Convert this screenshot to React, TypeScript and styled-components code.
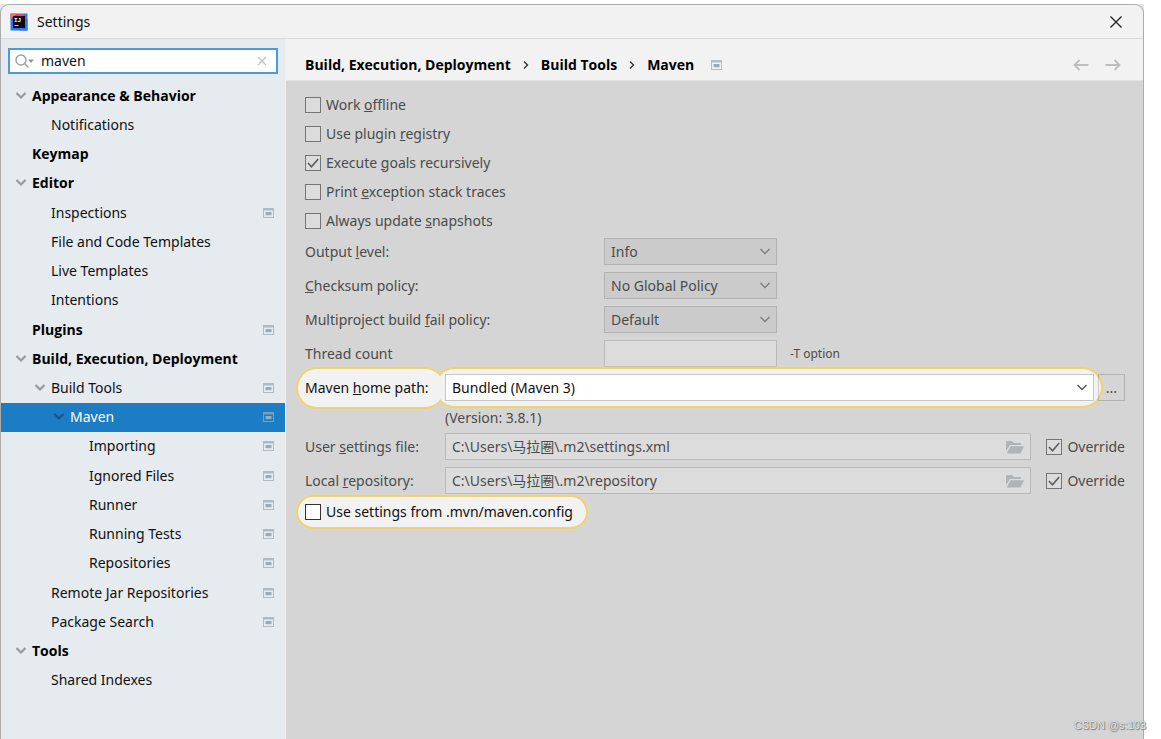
import React from 'react';
import styled, { createGlobalStyle, css } from 'styled-components';

const GlobalStyle = createGlobalStyle`
  * { box-sizing: border-box; }
  body {
    margin: 0;
    background: #fff;
    font-family: "Noto Sans", "Open Sans", "Noto Sans CJK SC", sans-serif;
    font-size: 14px;
    line-height: 20px;
    color: #111;
  }
  button, input, select { font: inherit; color: inherit; }
`;

const boldFont = css`
  font-family: "Open Sans", "Noto Sans", sans-serif;
  font-weight: 700;
  color: #000;
`;

const Page = styled.div`
  display: flex;
  flex-direction: column;
  min-height: 100vh;
  padding: 4px 17px 0 0;
`;

const Backdrop = styled.div`
  position: relative;
  flex: 1;
  display: flex;
  background: #e6e6e6;
`;

const Window = styled.div`
  flex: 1;
  display: flex;
  flex-direction: column;
  border: 1px solid #adadad;
  border-bottom: 0;
  border-radius: 9px 9px 0 0;
  background: #f2f2f2;
  overflow: hidden;
`;

const TitleBar = styled.header`
  display: flex;
  align-items: center;
  height: 34px;
  padding: 0 20px 0 9px;
  gap: 9px;
  border-bottom: 1px solid #dadada;
`;

const Title = styled.h1`
  flex: 1;
  margin: 0;
  font-size: 14px;
  font-weight: 400;
`;

const IconButton = styled.button`
  display: flex;
  align-items: center;
  justify-content: center;
  padding: 0;
  border: 0;
  background: none;
`;

const Body = styled.div`
  flex: 1;
  display: flex;
`;

const Sidebar = styled.aside`
  width: 284px;
  flex: none;
  background: #e5ebef;
`;

const SearchBox = styled.div`
  display: flex;
  align-items: center;
  height: 26px;
  margin: 9px 7px 7px;
  padding: 0 9px 0 5px;
  gap: 7px;
  border: 2px solid #4a9bd8;
  background: #fff;
`;

const SearchInput = styled.input`
  flex: 1;
  min-width: 0;
  padding: 0;
  border: 0;
  outline: 0;
  background: none;
`;

const Tree = styled.ul`
  display: grid;
  grid-auto-rows: 1fr;
  height: 614px;
  margin: 0;
  padding: 0;
  list-style: none;
`;

const TreeItem = styled.li`
  display: flex;
`;

const TreeRow = styled.button<{ $depth: number; $selected?: boolean; $bold?: boolean }>`
  flex: 1;
  display: flex;
  align-items: center;
  gap: 5px;
  padding: 0 11px 0 ${(p) => 14 + p.$depth * 19}px;
  border: 0;
  text-align: left;
  white-space: nowrap;
  color: ${(p) => (p.$selected ? '#fff' : '#111')};
  background: ${(p) => (p.$selected ? '#1c7cc4' : 'none')};
  ${(p) => p.$bold && boldFont}
`;

const ChevronSlot = styled.span`
  display: flex;
  width: 12px;
`;

const TreeLabel = styled.span`
  flex: 1;
`;

const Main = styled.main`
  flex: 1;
  min-width: 0;
  display: flex;
  flex-direction: column;
  border-left: 1px solid #eceff1;
`;

const Crumbs = styled.nav`
  display: flex;
  align-items: center;
  height: 42px;
  padding: 10px 22px 0 19px;
  gap: 12px;
  border-bottom: 1px solid #e2e2e2;
`;

const Crumb = styled.a`
  ${boldFont}
  text-decoration: none;
  white-space: nowrap;
`;

const CrumbIcon = styled.span`
  flex: 1;
  display: flex;
  padding-left: 5px;
`;

const NavButtons = styled.div`
  display: flex;
  gap: 16px;
`;

const Form = styled.form`
  flex: 1;
  padding: 9px 18px 0 19px;
  background: #d5d5d5;
  color: #4b4b4b;
`;

const CheckRow = styled.div`
  display: flex;
  align-items: center;
  height: 29px;
`;

const CheckLabel = styled.label`
  display: flex;
  align-items: center;
  gap: 5px;
  white-space: nowrap;
`;

const Tick = styled.span`
  display: grid;
  width: 16px;
  height: 16px;
  > * { grid-area: 1 / 1; }
  > svg { display: none; pointer-events: none; z-index: 1; }
  > input:checked + svg { display: block; }
`;

const TickInput = styled.input<{ $bright?: boolean }>`
  appearance: none;
  width: 16px;
  height: 16px;
  margin: 0;
  border: 1px solid ${(p) => (p.$bright ? '#333' : '#757575')};
  background: ${(p) => (p.$bright ? '#fff' : '#dcdcdc')};
`;

const Fields = styled.div`
  display: flex;
  flex-direction: column;
  gap: 7px;
  padding-top: 3px;
`;

const FieldRow = styled.div`
  display: flex;
  align-items: center;
  height: 27px;
  isolation: isolate;
`;

const FieldLabel = styled.label<{ $wide?: boolean }>`
  flex: none;
  width: ${(p) => (p.$wide ? 299 : 140)}px;
  white-space: nowrap;
`;

const SelectWrap = styled.span<{ $grow?: boolean }>`
  display: grid;
  align-items: center;
  ${(p) => (p.$grow ? css`flex: 1;` : css`width: 173px;`)}
  > * { grid-area: 1 / 1; }
  > svg { justify-self: end; margin-right: 6px; pointer-events: none; z-index: 1; }
`;

const Select = styled.select<{ $bright?: boolean }>`
  appearance: none;
  width: 100%;
  height: 27px;
  padding: 0 24px 0 6px;
  border: 1px solid ${(p) => (p.$bright ? '#c6c6c6' : '#b2b2b2')};
  border-radius: 0;
  background: ${(p) => (p.$bright ? '#fff' : '#cbcbcb')};
`;

const fieldBox = css`
  height: 27px;
  border: 1px solid #b9b9b9;
  background: #dcdcdc;
`;

const ThreadInput = styled.input`
  ${fieldBox}
  width: 173px;
  padding: 0 6px;
`;

const Hint = styled.span`
  margin-left: 13px;
  font-size: 12px;
`;

const PathBox = styled.span`
  ${fieldBox}
  flex: 1;
  display: flex;
  align-items: center;
  margin-right: 15px;
  padding: 0 6px;
`;

const PathInput = styled.input`
  flex: 1;
  min-width: 0;
  padding: 0;
  border: 0;
  background: none;
`;

const Version = styled.p`
  height: 18px;
  margin: 0 0 0 140px;
`;

/* The ring sits below every fill, so that neighbouring spotlights merge. */
const spotlight = css`
  position: relative;
  color: #111;
  &::before, &::after { content: ''; position: absolute; }
  &::before {
    z-index: -2;
    border-radius: 21px;
    background: #ebd27e;
    box-shadow: 0 0 2px #f3dc8c;
  }
  &::after { z-index: -1; border-radius: 19px; background: #f2f2f2; }
`;

const SpotLabel = styled(FieldLabel)`
  ${spotlight}
  &::before { inset: -11px -1px -11px -9px; }
  &::after { inset: -9px 1px -9px -7px; }
`;

const SpotSelect = styled.span`
  ${spotlight}
  flex: 1;
  display: flex;
  margin-right: 4px;
  &::before { inset: -7px -9px -7px -11px; }
  &::after { inset: -5px -7px -5px -9px; }
`;

const SpotCheck = styled.span`
  ${spotlight}
  padding-right: 6px;
  &::before { inset: -7px -9px; }
  &::after { inset: -5px -7px; }
`;

const SpotRow = styled(CheckRow)`
  height: 36px;
  isolation: isolate;
`;

const BrowseButton = styled.button`
  width: 27px;
  height: 27px;
  padding: 0;
  border: 1px solid rgba(0, 0, 0, 0.17);
  background: none;
  z-index: 1;
`;

const Watermark = styled.span`
  position: absolute;
  right: -2px;
  bottom: 4px;
  font-family: "Liberation Sans", sans-serif;
  font-size: 11px;
  color: #e6e6e6;
  text-shadow: 1px 1px 1px #777, 0 0 1px #777;
`;

const Chevron = ({ color = '#8b9095', width = 2 }: { color?: string; width?: number }) => (
  <svg width="12" height="12" viewBox="0 0 12 12" fill="none" stroke={color} strokeWidth={width}>
    <path d="M1.5 3 6 7.500l4.500-4.500" />
  </svg>
);

const ProjectIcon = () => (
  <svg width="11" height="10" viewBox="0 0 11 10">
    <path fill="#9cabb5" fillOpacity=".75" fillRule="evenodd" d="M0 0h11v10H0zM1 2.500v6.500h9V2.500z" />
    <path fill="#9cabb5" d="M2.500 4h6v3.200h-6z" />
  </svg>
);

const FolderIcon = () => (
  <svg width="18" height="14" viewBox="0 0 18 14" fill="#b0b4b7">
    <path d="M0 1h6l2 2h7v2H4L0 11z" />
    <path d="M4.500 6.200H18L14.500 13.500H.800z" />
  </svg>
);

const Logo = () => (
  <svg width="18" height="18" viewBox="0 0 18 18">
    <defs>
      <linearGradient id="logo" x1="0" y1="1" x2="1" y2="0">
        <stop offset="0" stopColor="#1a8cff" />
        <stop offset=".4" stopColor="#2c62e8" />
        <stop offset=".55" stopColor="#b13a9a" />
        <stop offset=".75" stopColor="#fb3f6c" />
        <stop offset=".9" stopColor="#2f7de9" />
      </linearGradient>
    </defs>
    <path fill="url(#logo)" d="M.5.500h17v17H.500z" />
    <path fill="#2b7cf0" d="M15 6h2.500v11.500H10V15h5z" />
    <path fill="#f9743a" d="M.5 6V.5H7z" />
    <rect x="3" y="3" width="12" height="12" fill="#0f0614" />
    <text x="4" y="9" fontSize="6" fontWeight="700" fill="#fff" fontFamily="Liberation Mono">IJ</text>
    <path fill="#ccc" d="M4.500 12h4v1h-4z" />
  </svg>
);

const Check = ({ label, checked, bright }: { label: React.ReactNode; checked?: boolean; bright?: boolean }) => (
  <CheckLabel>
    <Tick>
      <TickInput type="checkbox" defaultChecked={checked} $bright={bright} />
      <svg width="16" height="16" viewBox="0 0 16 16" fill="none" stroke="#5c5c5c" strokeWidth="1.6">
        <path d="M3 8l3.500 3.800L13.200 4" />
      </svg>
    </Tick>
    <span>{label}</span>
  </CheckLabel>
);

type Node = { label: string; depth: number; open?: boolean; project?: boolean; selected?: boolean };

const nodes: Node[] = [
  { label: 'Appearance & Behavior', depth: 0, open: true },
  { label: 'Notifications', depth: 1 },
  { label: 'Keymap', depth: 0 },
  { label: 'Editor', depth: 0, open: true },
  { label: 'Inspections', depth: 1, project: true },
  { label: 'File and Code Templates', depth: 1 },
  { label: 'Live Templates', depth: 1 },
  { label: 'Intentions', depth: 1 },
  { label: 'Plugins', depth: 0, project: true },
  { label: 'Build, Execution, Deployment', depth: 0, open: true },
  { label: 'Build Tools', depth: 1, open: true, project: true },
  { label: 'Maven', depth: 2, open: true, project: true, selected: true },
  { label: 'Importing', depth: 3, project: true },
  { label: 'Ignored Files', depth: 3, project: true },
  { label: 'Runner', depth: 3, project: true },
  { label: 'Running Tests', depth: 3, project: true },
  { label: 'Repositories', depth: 3, project: true },
  { label: 'Remote Jar Repositories', depth: 1, project: true },
  { label: 'Package Search', depth: 1, project: true },
  { label: 'Tools', depth: 0, open: true },
  { label: 'Shared Indexes', depth: 1 },
];

const Separator = () => (
  <svg width="6" height="10" viewBox="0 0 6 10" fill="none" stroke="#333" strokeWidth="1.4">
    <path d="M1 1.500 4.500 5 1 8.500" />
  </svg>
);

export default function App() {
  return (
    <Page>
      <GlobalStyle />
      <Backdrop>
        <Window>
          <TitleBar>
            <Logo />
            <Title>Settings</Title>
            <IconButton type="button" aria-label="Close">
              <svg width="14" height="14" viewBox="0 0 14 14" stroke="#222" strokeWidth="1.300">
                <path d="M1.500 1.500l11 11M12.500 1.500l-11 11" />
              </svg>
            </IconButton>
          </TitleBar>
          <Body>
            <Sidebar>
              <SearchBox>
                <svg width="19" height="16" viewBox="0 0 19 16" fill="none" stroke="#9aa3aa" strokeWidth="1.500">
                  <circle cx="6" cy="7" r="5" />
                  <path d="M9.500 10.500l4 4" />
                  <path d="M13 6.500h6L16 10z" fill="#8b959c" stroke="none" />
                </svg>
                <SearchInput aria-label="Search settings" defaultValue="maven" />
                <IconButton type="button" aria-label="Clear">
                  <svg width="10" height="10" viewBox="0 0 10 10" stroke="#bcc1c5" strokeWidth="1.300">
                    <path d="M1 1l8 8M9 1l-8 8" />
                  </svg>
                </IconButton>
              </SearchBox>
              <Tree>
                {nodes.map((n) => (
                  <TreeItem key={n.label}>
                    <TreeRow type="button" $depth={n.depth} $selected={n.selected} $bold={n.depth === 0}>
                      <ChevronSlot>
                        {n.open && <Chevron color={n.selected ? '#17568a' : '#949a9f'} width={2.2} />}
                      </ChevronSlot>
                      <TreeLabel>{n.label}</TreeLabel>
                      {n.project && <ProjectIcon />}
                    </TreeRow>
                  </TreeItem>
                ))}
              </Tree>
            </Sidebar>
            <Main>
              <Crumbs aria-label="Breadcrumb">
                <Crumb href="#build">Build, Execution, Deployment</Crumb>
                <Separator />
                <Crumb href="#tools">Build Tools</Crumb>
                <Separator />
                <Crumb href="#maven">Maven</Crumb>
                <CrumbIcon><ProjectIcon /></CrumbIcon>
                <NavButtons>
                  <IconButton type="button" aria-label="Back">
                    <svg width="16" height="12" viewBox="0 0 16 12" fill="none" stroke="#bdbdbd" strokeWidth="1.800">
                      <path d="M15.500 6H1.500M6.500 1l-5 5 5 5" />
                    </svg>
                  </IconButton>
                  <IconButton type="button" aria-label="Forward">
                    <svg width="16" height="12" viewBox="0 0 16 12" fill="none" stroke="#bdbdbd" strokeWidth="1.800">
                      <path d="M.500 6h14M9.500 1l5 5-5 5" />
                    </svg>
                  </IconButton>
                </NavButtons>
              </Crumbs>
              <Form>
                <CheckRow><Check label={<>Work <u>o</u>ffline</>} /></CheckRow>
                <CheckRow><Check label={<>Use plugin <u>r</u>egistry</>} /></CheckRow>
                <CheckRow><Check checked label={<>Execute <u>g</u>oals recursively</>} /></CheckRow>
                <CheckRow><Check label={<>Print <u>e</u>xception stack traces</>} /></CheckRow>
                <CheckRow><Check label={<>Always update <u>s</u>napshots</>} /></CheckRow>
                <Fields>
                  <FieldRow>
                    <FieldLabel $wide htmlFor="level">Output <u>l</u>evel:</FieldLabel>
                    <SelectWrap>
                      <Select id="level"><option>Info</option></Select>
                      <Chevron color="#808080" width={1.5} />
                    </SelectWrap>
                  </FieldRow>
                  <FieldRow>
                    <FieldLabel $wide htmlFor="checksum"><u>C</u>hecksum policy:</FieldLabel>
                    <SelectWrap>
                      <Select id="checksum"><option>No Global Policy</option></Select>
                      <Chevron color="#808080" width={1.5} />
                    </SelectWrap>
                  </FieldRow>
                  <FieldRow>
                    <FieldLabel $wide htmlFor="fail">Multiproject build <u>f</u>ail policy:</FieldLabel>
                    <SelectWrap>
                      <Select id="fail"><option>Default</option></Select>
                      <Chevron color="#808080" width={1.5} />
                    </SelectWrap>
                  </FieldRow>
                  <FieldRow>
                    <FieldLabel $wide htmlFor="threads">Thread count</FieldLabel>
                    <ThreadInput id="threads" />
                    <Hint>-T option</Hint>
                  </FieldRow>
                  <FieldRow>
                    <SpotLabel htmlFor="home">Maven <u>h</u>ome path:</SpotLabel>
                    <SpotSelect>
                      <SelectWrap $grow>
                        <Select id="home" $bright><option>Bundled (Maven 3)</option></Select>
                        <Chevron color="#555" width={1.5} />
                      </SelectWrap>
                    </SpotSelect>
                    <BrowseButton type="button" aria-label="Browse">...</BrowseButton>
                  </FieldRow>
                  <Version>(Version: 3.8.1)</Version>
                  <FieldRow>
                    <FieldLabel htmlFor="settings">User <u>s</u>ettings file:</FieldLabel>
                    <PathBox>
                      <PathInput id="settings" defaultValue={'C:\\Users\\马拉圈\\.m2\\settings.xml'} />
                      <FolderIcon />
                    </PathBox>
                    <Check checked label="Override" />
                  </FieldRow>
                  <FieldRow>
                    <FieldLabel htmlFor="repository">Local <u>r</u>epository:</FieldLabel>
                    <PathBox>
                      <PathInput id="repository" defaultValue={'C:\\Users\\马拉圈\\.m2\\repository'} />
                      <FolderIcon />
                    </PathBox>
                    <Check checked label="Override" />
                  </FieldRow>
                </Fields>
                <SpotRow>
                  <SpotCheck><Check bright label="Use settings from .mvn/maven.config" /></SpotCheck>
                </SpotRow>
              </Form>
            </Main>
          </Body>
        </Window>
        <Watermark>CSDN @s:103</Watermark>
      </Backdrop>
    </Page>
  );
}
